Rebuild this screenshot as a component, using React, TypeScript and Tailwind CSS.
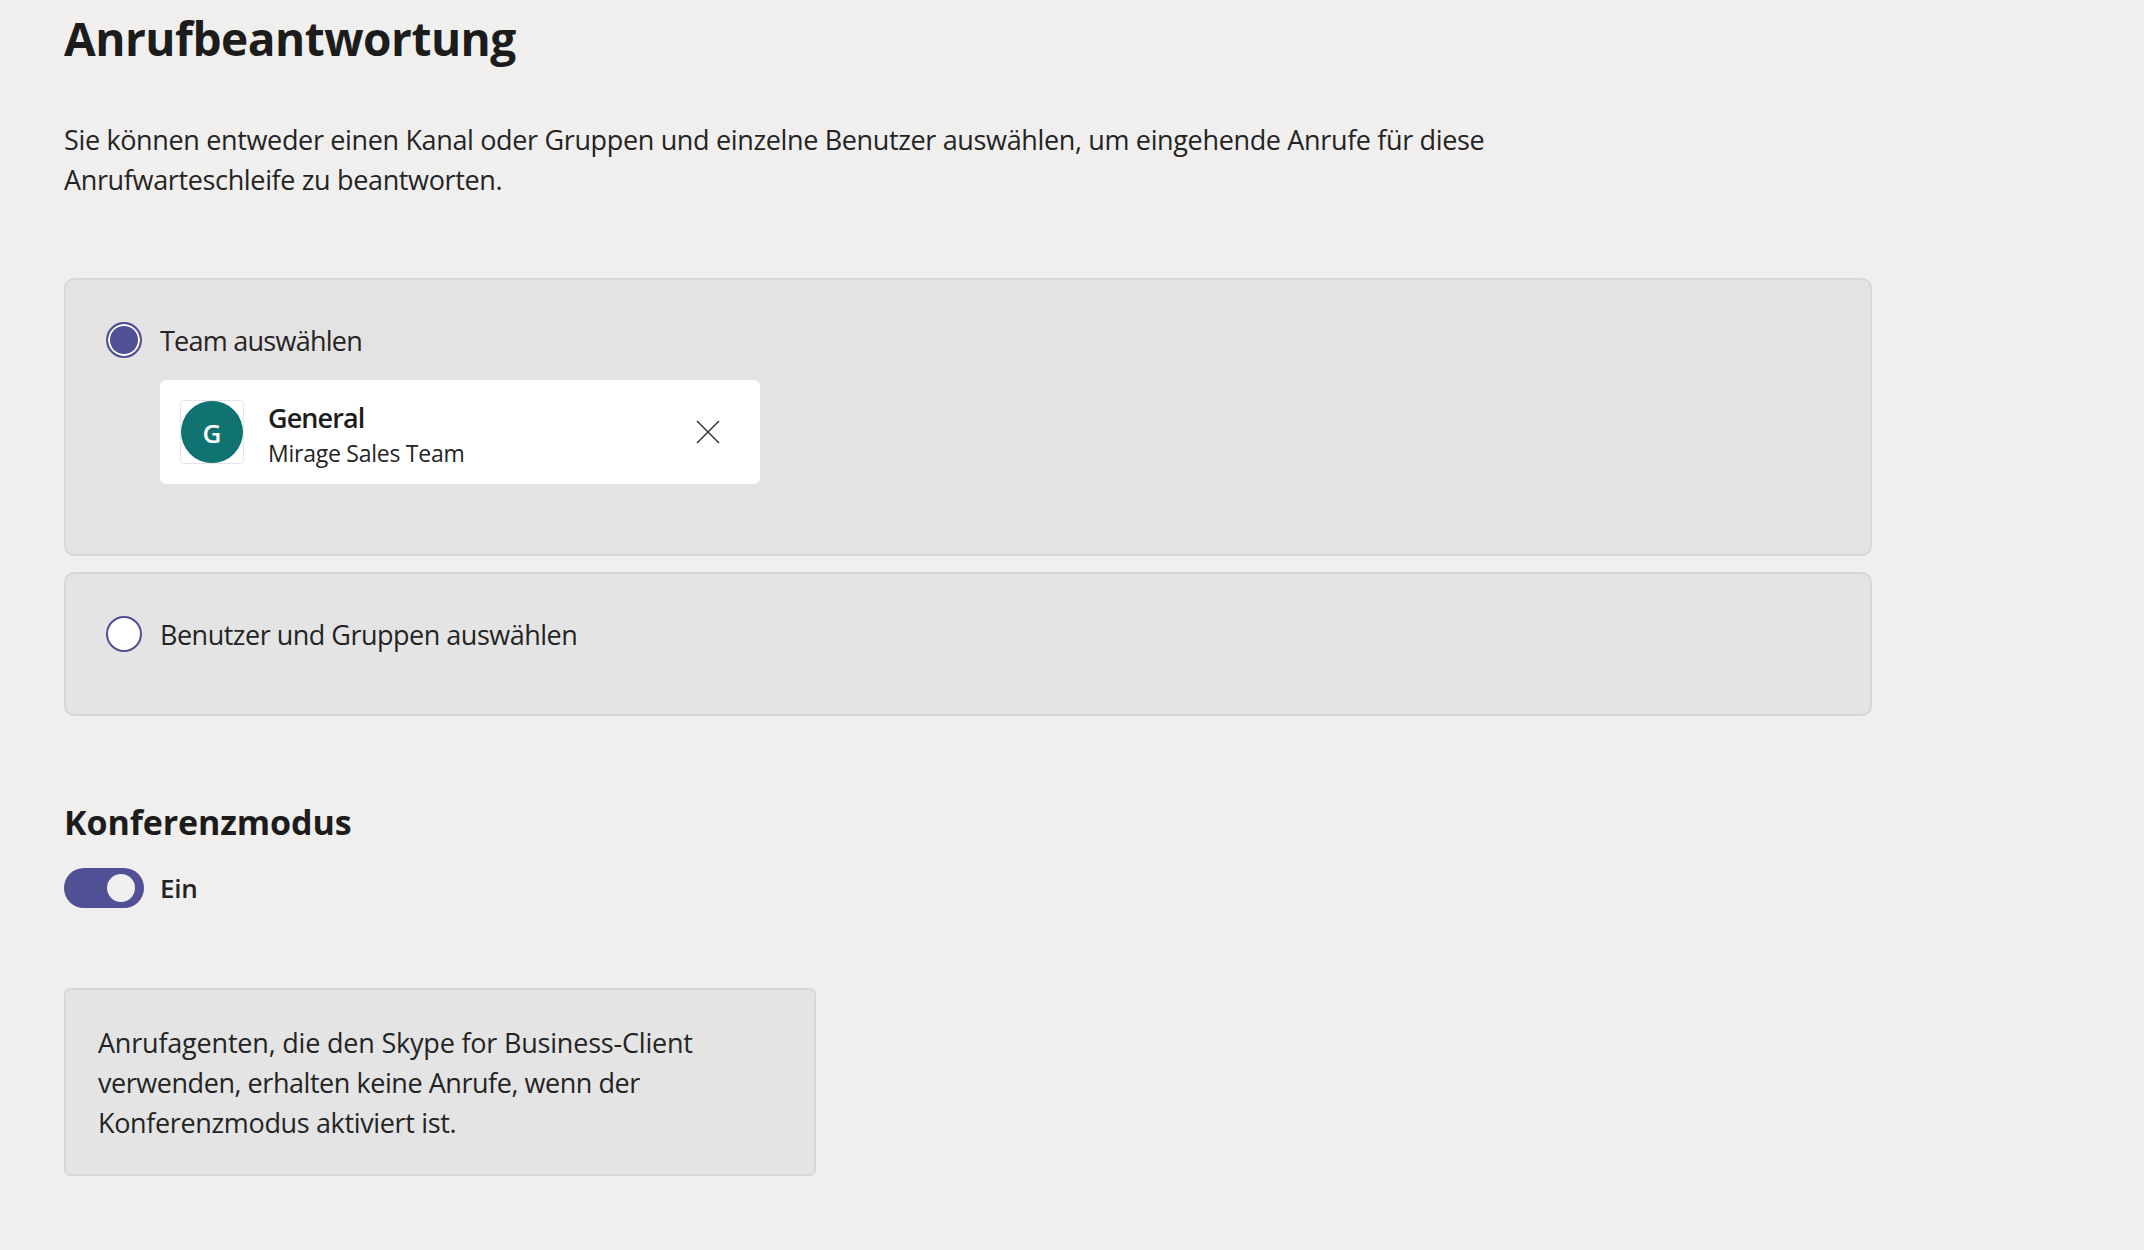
export default function App() {
  return (
    <div className="min-h-[1250px] bg-[#f0efee] pl-16 pt-[8px] text-[#242424] font-['Open_Sans','Noto_Sans',sans-serif] overflow-hidden">
      <h1 className="text-[46px] leading-[60px] font-bold text-[#1c1c1c] tracking-[-0.5px]">Anrufbeantwortung</h1>
      <p className="mt-[52px] w-[1480px] text-[27px] leading-[40px] tracking-[-0.35px]">
        Sie können entweder einen Kanal oder Gruppen und einzelne Benutzer auswählen, um eingehende Anrufe für diese
        <br />
        Anrufwarteschleife zu beantworten.
      </p>
      <div className="mt-[78px] w-[1808px] h-[278px] rounded-[10px] border-2 border-[#d8d7d8] bg-[#e4e2e3] pl-[40px] pt-[42px]">
        <div className="flex items-center gap-[18px] h-[36px]">
          <span className="w-[36px] h-[36px] rounded-full border-2 border-[#505096] bg-[#505096] shadow-[inset_0_0_0_2px_#ffffff]" />
          <span className="text-[27px] tracking-[-0.75px] pt-[3px]">Team auswählen</span>
        </div>
        <div className="mt-[22px] ml-[54px] w-[600px] h-[104px] rounded-[6px] bg-white flex items-center pl-[20px] pr-[40px]">
          <span className="w-[64px] h-[64px] rounded-[4px] border border-[#e4e2ee] flex items-center justify-center">
            <span className="w-[62px] h-[62px] rounded-full bg-[#107372] text-white text-[26px] font-semibold flex items-center justify-center pt-[2px]">G</span>
          </span>
          <div className="ml-[24px] flex-1 pt-[6px]">
            <div className="text-[27px] leading-[36px] font-semibold text-[#1c1c1c] tracking-[-0.9px]">General</div>
            <div className="text-[23px] leading-[35px] tracking-[-0.25px]">Mirage Sales Team</div>
          </div>
          <svg width="24" height="24" viewBox="0 0 24 24" fill="none" stroke="#333333" strokeWidth="1.5">
            <path d="M1 1 L23 23 M23 1 L1 23" />
          </svg>
        </div>
      </div>
      <div className="mt-[16px] w-[1808px] h-[144px] rounded-[10px] border-2 border-[#d8d7d8] bg-[#e4e4e5] pl-[40px] pt-[42px]">
        <div className="flex items-center gap-[18px] h-[36px]">
          <span className="w-[36px] h-[36px] rounded-full border-2 border-[#505096] bg-white" />
          <span className="text-[27px] tracking-[-0.5px] pt-[3px]">Benutzer und Gruppen auswählen</span>
        </div>
      </div>
      <h2 className="mt-[83px] text-[34px] leading-[46px] font-bold text-[#1c1c1c] tracking-[-0.1px]">Konferenzmodus</h2>
      <div className="mt-[23px] flex items-center gap-[16px] h-[40px]">
        <span className="w-[80px] h-[40px] rounded-full bg-[#505096] flex items-center justify-end pr-[9px]">
          <span className="w-[28px] h-[28px] rounded-full bg-[#efeff1]" />
        </span>
        <span className="text-[26px] font-semibold tracking-[-0.2px]">Ein</span>
      </div>
      <div className="mt-[80px] w-[752px] h-[188px] rounded-[6px] border-2 border-[#d8d7d8] bg-[#e4e4e5] pl-[32px] pt-[33px] text-[27px] leading-[40px] tracking-[-0.3px]">
        <span className="tracking-[-0.2px]">Anrufagenten, die den Skype for Business-Client</span>
        <br />
        <span className="tracking-[-0.45px]">verwenden, erhalten keine Anrufe, wenn der</span>
        <br />
        <span className="tracking-[-0.35px]">Konferenzmodus aktiviert ist.</span>
      </div>
    </div>
  );
}
